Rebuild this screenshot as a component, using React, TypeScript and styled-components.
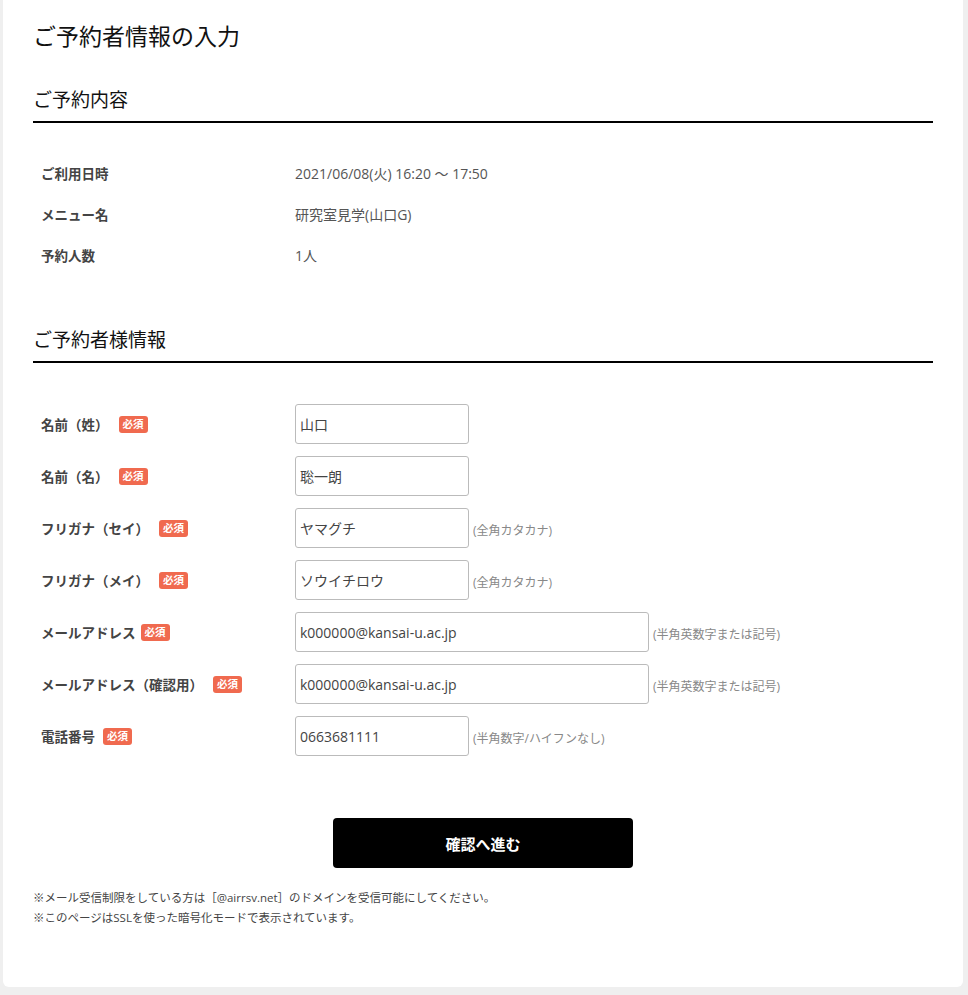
import React from 'react';
import styled, { createGlobalStyle } from 'styled-components';

const GlobalStyle = createGlobalStyle`
  html, body {
    margin: 0;
    padding: 0;
    background: #efefef;
  }
  body {
    font-family: "Open Sans", "Noto Sans CJK JP", sans-serif;
    color: #333;
  }
`;

const Card = styled.div`
  width: 960px;
  margin: 0 0 7px 3px;
  background: #ffffff;
  border-radius: 0 0 6px 6px;
  padding: 20px 30px 59px;
  box-sizing: border-box;
`;

const PageTitle = styled.h1`
  font-size: 23px;
  font-weight: normal;
  color: #111;
  margin: 0 0 35px;
  line-height: 32px;
`;

const SectionTitle = styled.h2`
  font-size: 19px;
  font-weight: normal;
  color: #111;
  margin: 0;
  padding-bottom: 8px;
  line-height: 26px;
  border-bottom: 2px solid #000;
`;

const InfoTable = styled.div`
  display: flex;
  flex-direction: column;
  gap: 19px;
  padding: 40px 0 60px;
`;

const InfoRow = styled.div`
  display: grid;
  grid-template-columns: 262px 1fr;
  font-size: 13.5px;
  line-height: 22px;
`;

const InfoLabel = styled.div`
  padding-left: 8px;
  font-weight: bold;
  color: #444;
`;

const InfoValue = styled.div`
  color: #555;
  font-size: 14px;
`;

const FormTable = styled.div`
  display: flex;
  flex-direction: column;
  gap: 12px;
  padding: 41px 0 62px;
`;

const FormRow = styled.div`
  display: grid;
  grid-template-columns: 262px 1fr;
  align-items: center;
`;

const FormLabel = styled.div`
  padding-left: 8px;
  font-size: 13.5px;
  font-weight: bold;
  color: #444;
  display: flex;
  align-items: center;
`;

const Required = styled.span<{ $gap: number }>`
  display: inline-block;
  background: #f06a4f;
  color: #fff;
  font-size: 10.5px;
  font-weight: bold;
  line-height: 17px;
  padding: 0 4px;
  border-radius: 3px;
  margin-left: ${(p) => p.$gap}px;
`;

const Field = styled.div`
  display: flex;
  align-items: center;
  gap: 4px;
`;

const Input = styled.input<{ $wide?: boolean }>`
  width: ${(p) => (p.$wide ? 354 : 174)}px;
  height: 40px;
  box-sizing: border-box;
  border: 1px solid #bbb;
  border-radius: 3px;
  padding: 0 4px;
  font-family: inherit;
  font-size: 14px;
  color: #444;
  background: #fff;
  outline: none;
`;

const Hint = styled.span`
  font-size: 12px;
  color: #888;
  padding-top: 4px;
`;

const ButtonWrap = styled.div`
  display: flex;
  justify-content: center;
`;

const SubmitButton = styled.button`
  width: 300px;
  height: 50px;
  background: #000;
  color: #fff;
  border: none;
  border-radius: 4px;
  font-family: inherit;
  font-size: 15px;
  font-weight: bold;
  cursor: pointer;
`;

const Notes = styled.div`
  margin-top: 20px;
  font-size: 11.5px;
  line-height: 20px;
  color: #444;
`;

const infoRows = [
  ['ご利用日時', '2021/06/08(火) 16:20 ～ 17:50'],
  ['メニュー名', '研究室見学(山口G)'],
  ['予約人数', '1人'],
];

const formRows = [
  { label: '名前（姓）', gap: 10, value: '山口' },
  { label: '名前（名）', gap: 10, value: '聡一朗' },
  { label: 'フリガナ（セイ）', gap: 10, value: 'ヤマグチ', hint: '(全角カタカナ)' },
  { label: 'フリガナ（メイ）', gap: 10, value: 'ソウイチロウ', hint: '(全角カタカナ)' },
  { label: 'メールアドレス', gap: 5, value: 'k000000@kansai-u.ac.jp', hint: '(半角英数字または記号)', wide: true },
  { label: 'メールアドレス（確認用）', gap: 10, value: 'k000000@kansai-u.ac.jp', hint: '(半角英数字または記号)', wide: true },
  { label: '電話番号', gap: 8, value: '0663681111', hint: '(半角数字/ハイフンなし)' },
];

export default function App() {
  return (
    <>
      <GlobalStyle />
      <Card>
        <PageTitle>ご予約者情報の入力</PageTitle>

        <SectionTitle>ご予約内容</SectionTitle>
        <InfoTable>
          {infoRows.map(([label, value]) => (
            <InfoRow key={label}>
              <InfoLabel>{label}</InfoLabel>
              <InfoValue>{value}</InfoValue>
            </InfoRow>
          ))}
        </InfoTable>

        <SectionTitle>ご予約者様情報</SectionTitle>
        <FormTable>
          {formRows.map((row) => (
            <FormRow key={row.label}>
              <FormLabel>
                {row.label}
                <Required $gap={row.gap}>必須</Required>
              </FormLabel>
              <Field>
                <Input $wide={row.wide} defaultValue={row.value} />
                {row.hint && <Hint>{row.hint}</Hint>}
              </Field>
            </FormRow>
          ))}
        </FormTable>

        <ButtonWrap>
          <SubmitButton>確認へ進む</SubmitButton>
        </ButtonWrap>

        <Notes>
          ※メール受信制限をしている方は［@airrsv.net］のドメインを受信可能にしてください。
          <br />
          ※このページはSSLを使った暗号化モードで表示されています。
        </Notes>
      </Card>
    </>
  );
}
